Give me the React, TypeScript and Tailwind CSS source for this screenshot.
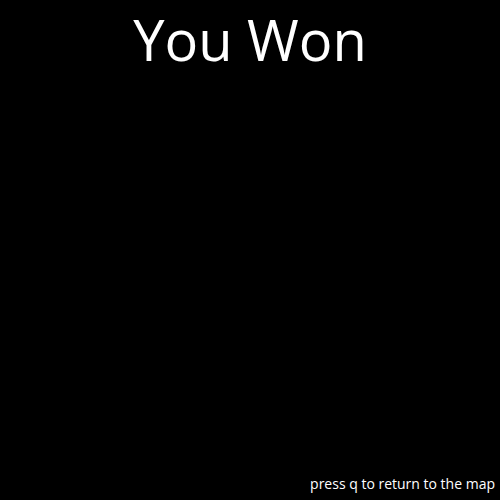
import React from 'react';

const App: React.FC = () => {
  return (
    <div className="w-[500px] h-[500px] bg-black text-white flex flex-col justify-between font-['Open_Sans',sans-serif]">
      <h1 className="text-center text-[56px] leading-none pt-[11px]">You Won</h1>
      <p className="text-right text-[14px] leading-none pr-[5px] pb-[9px]">press q to return to the map</p>
    </div>
  );
};

export default App;
